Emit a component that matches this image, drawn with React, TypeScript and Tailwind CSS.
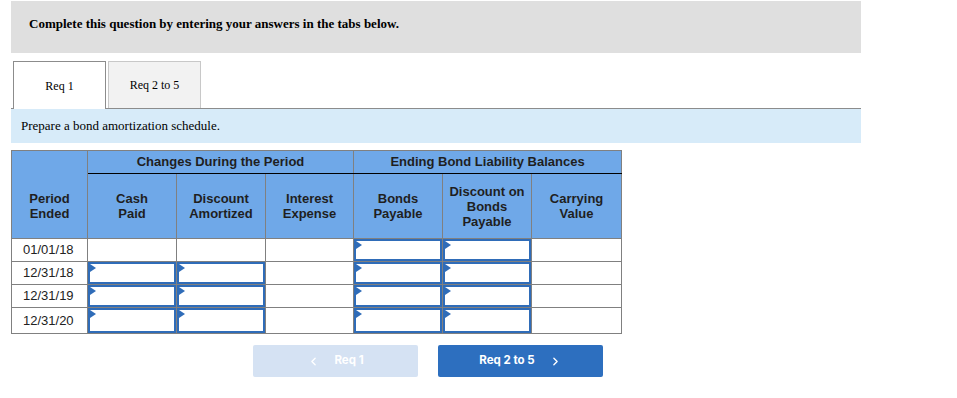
import { ChevronLeft, ChevronRight } from 'lucide-react';

const ROWS = ['01/01/18', '12/31/18', '12/31/19', '12/31/20'];

function Field() {
  return (
    <div className="relative h-full w-full border-2 border-[#2f6cb8] bg-white">
      <span className="absolute left-0 top-0 h-0 w-0 border-y-[4px] border-l-[6px] border-y-transparent border-l-[#2f6cb8]" />
    </div>
  );
}

function Cell({ input }: { input: boolean }) {
  return (
    <td className="h-[23px] border border-[#808080] p-0">
      {input ? <Field /> : null}
    </td>
  );
}

export default function App() {
  const serif = { fontFamily: '"Liberation Serif", serif' };
  return (
    <div className="relative h-[398px] w-[957px] bg-white" style={{ fontFamily: '"Liberation Sans", Arial, sans-serif' }}>
      <div className="ml-[11px] mt-[1px] h-[52px] w-[850px] bg-[#dfdfdf] pl-[18px] pt-[13px] text-[13px] font-bold text-black" style={serif}>
        Complete this question by entering your answers in the tabs below.
      </div>

      <div className="ml-[11px] mt-[8px] flex h-[48px] w-[850px] items-end border-b border-[#8c8c8c]" style={serif}>
        <div className="ml-[2px] mb-[-1px] flex h-[48px] w-[93px] items-center justify-center border border-b-0 border-[#8c8c8c] bg-white text-[12px] text-black">
          Req 1
        </div>
        <div className="ml-[2px] flex h-[47px] w-[93px] items-center justify-center border border-b-0 border-[#c8c8c8] bg-[#f2f2f2] text-[12px] text-black">
          Req 2 to 5
        </div>
      </div>

      <div className="ml-[11px] flex h-[34px] w-[850px] items-center bg-[#d7ebf9] pl-[10px] text-[13px] text-black" style={serif}>
        Prepare a bond amortization schedule.
      </div>

      <table className="ml-[11px] mt-[7px] w-[610px] table-fixed border-collapse text-[13px]">
        <colgroup>
          <col className="w-[76px]" />
          <col className="w-[89px]" />
          <col className="w-[89px]" />
          <col className="w-[88px]" />
          <col className="w-[89px]" />
          <col className="w-[89px]" />
          <col className="w-[90px]" />
        </colgroup>
        <thead>
          <tr className="h-[23px] bg-[#6fa8e8] font-bold text-[#1f1f1f]">
            <th className="border border-b-0 border-[#808080] p-0" />
            <th colSpan={3} className="border border-[#808080] border-b-black p-0 font-bold">Changes During the Period</th>
            <th colSpan={3} className="border border-[#808080] border-b-black p-0 font-bold">Ending Bond Liability Balances</th>
          </tr>
          <tr className="h-[65px] bg-[#6fa8e8] font-bold leading-[15px] text-[#1f1f1f]">
            <th className="border border-t-0 border-[#808080] p-0 font-bold">Period<br />Ended</th>
            <th className="border border-[#808080] border-t-black p-0 font-bold">Cash<br />Paid</th>
            <th className="border border-[#808080] border-t-black p-0 font-bold">Discount<br />Amortized</th>
            <th className="border border-[#808080] border-t-black p-0 font-bold">Interest<br />Expense</th>
            <th className="border border-[#808080] border-t-black p-0 font-bold">Bonds<br />Payable</th>
            <th className="border border-[#808080] border-t-black p-0 font-bold">Discount on<br />Bonds<br />Payable</th>
            <th className="border border-[#808080] border-t-black p-0 font-bold">Carrying<br />Value</th>
          </tr>
        </thead>
        <tbody>
          {ROWS.map((d, i) => (
            <tr key={d} className={i === 3 ? 'h-[26px]' : 'h-[23px]'}>
              <td className="border border-[#808080] pl-[11px] text-[13px] text-[#222]">{d}</td>
              <Cell input={i > 0} />
              <Cell input={i > 0} />
              <Cell input={false} />
              <Cell input />
              <Cell input />
              <Cell input={false} />
            </tr>
          ))}
        </tbody>
      </table>

      <div className="ml-[253px] mt-[11px] flex gap-[20px]" style={{ fontFamily: 'Inter, sans-serif' }}>
        <button className="flex h-[32px] w-[165px] items-center justify-center gap-[14px] rounded-[2px] bg-[#d5e2f3] text-[11.5px] font-bold text-white">
          <ChevronLeft size={13} strokeWidth={2.5} />
          <span>Req 1</span>
        </button>
        <button className="flex h-[32px] w-[165px] items-center justify-center gap-[14px] rounded-[2px] bg-[#2d6fbf] text-[11.5px] font-bold text-white">
          <span>Req 2 to 5</span>
          <ChevronRight size={13} strokeWidth={2.5} />
        </button>
      </div>
    </div>
  );
}
